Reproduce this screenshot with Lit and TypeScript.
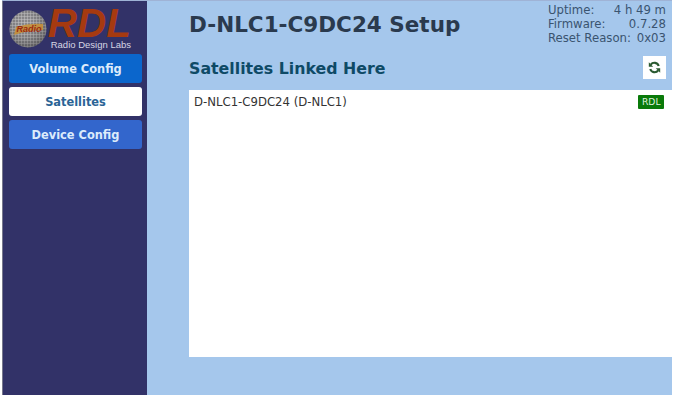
import { LitElement, html, css, svg } from "lit";
import { customElement } from "lit/decorators.js";

const ball = () => svg`
  <svg class="ball" viewBox="0 0 38 38" width="38" height="38" aria-hidden="true">
    <defs>
      <pattern id="mesh" width="3" height="3" patternUnits="userSpaceOnUse">
        <rect width="3" height="3" fill="#77767a"/>
        <path d="M0 0H3M0 0V3" stroke="#c6c5c6" stroke-width="1"/>
      </pattern>
      <radialGradient id="shade" cx=".42" cy=".35" r=".7">
        <stop offset="0" stop-color="#fff" stop-opacity=".12"/>
        <stop offset="1" stop-color="#222" stop-opacity=".4"/>
      </radialGradient>
    </defs>
    <circle cx="19" cy="19" r="18.5" fill="url(#mesh)"/>
    <circle cx="19" cy="19" r="18.5" fill="url(#shade)"/>
    <path d="M5 25 L7 17 Q20 13 34 14 L34 20 Q20 20 5 25Z" fill="#c98f32" opacity=".85"/>
    <text x="20" y="22" text-anchor="middle" class="ball-text">Radio</text>
  </svg>`;

const refresh = () => svg`
  <svg viewBox="0 0 16 16" width="13" height="13" aria-hidden="true">
    <path d="M13.2 6.2A5.6 5.6 0 0 0 3.4 4.4" fill="none" stroke="#2a5a30" stroke-width="2.6"/>
    <path d="M2.8 9.8A5.6 5.6 0 0 0 12.6 11.6" fill="none" stroke="#2a5a30" stroke-width="2.6"/>
    <path d="M1 1.6V7.2H6.4Z" fill="#2a5a30"/>
    <path d="M15 14.4V8.8H9.6Z" fill="#2a5a30"/>
  </svg>`;

@customElement("app-root")
export class AppRoot extends LitElement {
  static styles = css`
    :host {
      display: block;
      width: 676px;
      height: 402px;
      background: #fff;
      font-family: "DejaVu Sans", Verdana, sans-serif;
      overflow: hidden;
    }
    .frame {
      display: flex;
      width: 670px;
      height: 394px;
      margin-left: 2px;
      background: #a5c7ec;
      border-top: 1px solid #9fb3d6;
    }
    .side {
      flex: none;
      width: 145px;
      background: #323268;
      border-left: 1px solid #77788c;
      display: flex;
      flex-direction: column;
      box-sizing: border-box;
      padding: 7px 5px 0 6px;
    }
    .logo {
      display: flex;
      align-items: flex-start;
      height: 46px;
      gap: 3px;
    }
    .ball {
      flex: none;
      margin-top: 2px;
    }
    .ball-text {
      font: italic bold 9px "Liberation Sans", sans-serif;
      fill: #9c2a10;
    }
    .brand {
      display: flex;
      flex-direction: column;
      align-items: flex-end;
      width: 81px;
    }
    .rdl {
      font: italic bold 40.5px/31px "Liberation Sans", Arial, sans-serif;
      color: #a63a10;
      height: 31px;
    }
    .labs {
      font: 9.5px/11px "Liberation Sans", Arial, sans-serif;
      color: #d6d6e4;
      white-space: nowrap;
    }
    nav {
      display: flex;
      flex-direction: column;
      gap: 4px;
    }
    .btn {
      height: 29px;
      border-radius: 3px;
      display: flex;
      align-items: center;
      justify-content: center;
      font-size: 11.4px;
      font-weight: 700;
      background: #3366cc;
      color: #dcebfb;
    }
    .btn.blue {
      background: #0b66cc;
    }
    .btn.active {
      background: #fff;
      color: #2a6496;
    }
    main {
      flex: 1;
      min-width: 0;
      display: flex;
      flex-direction: column;
      padding-left: 42px;
    }
    .head {
      display: flex;
      justify-content: space-between;
      height: 55px;
    }
    h1 {
      margin: 10px 0 0 0;
      font-size: 21.5px;
      line-height: 28px;
      font-weight: 700;
      color: #2a3a4e;
      white-space: nowrap;
    }
    .stats {
      width: 118px;
      padding: 2px 6px 0 0;
      font-size: 11.7px;
      line-height: 14px;
      color: #3a5470;
    }
    .stats div {
      display: flex;
      justify-content: space-between;
      white-space: pre;
    }
    .sub {
      display: flex;
      justify-content: space-between;
      align-items: flex-start;
      height: 34px;
    }
    h2 {
      margin: 1px 0 0 0;
      font-size: 15.8px;
      line-height: 24px;
      font-weight: 700;
      color: #0e4a66;
    }
    .refresh {
      width: 23px;
      height: 23px;
      margin-right: 6px;
      background: #fff;
      display: flex;
      align-items: center;
      justify-content: center;
    }
    .panel {
      height: 267px;
      background: #fff;
      display: flex;
      justify-content: space-between;
      align-items: flex-start;
      box-sizing: border-box;
      padding: 5px 8px 0 5px;
      font-size: 11.7px;
      line-height: 14px;
      color: #333;
    }
    .tag {
      background: #0a7a0a;
      color: #dff0df;
      font-size: 9.2px;
      line-height: 14px;
      padding: 0 3.5px;
      border-radius: 1px;
    }
  `;

  render() {
    return html`
      <div class="frame">
        <aside class="side">
          <div class="logo">
            ${ball()}
            <div class="brand">
              <span class="rdl">RDL</span>
              <span class="labs">Radio Design Labs</span>
            </div>
          </div>
          <nav>
            <div class="btn blue">Volume Config</div>
            <div class="btn active">Satellites</div>
            <div class="btn">Device Config</div>
          </nav>
        </aside>
        <main>
          <div class="head">
            <h1>D-NLC1-C9DC24 Setup</h1>
            <div class="stats">
              <div><span>Uptime:</span><span>4 h 49 m</span></div>
              <div><span>Firmware:</span><span>0.7.28</span></div>
              <div><span>Reset Reason:</span><span>0x03</span></div>
            </div>
          </div>
          <div class="sub">
            <h2>Satellites Linked Here</h2>
            <div class="refresh">${refresh()}</div>
          </div>
          <div class="panel">
            <span>D-NLC1-C9DC24 (D-NLC1)</span>
            <span class="tag">RDL</span>
          </div>
        </main>
      </div>
    `;
  }
}
